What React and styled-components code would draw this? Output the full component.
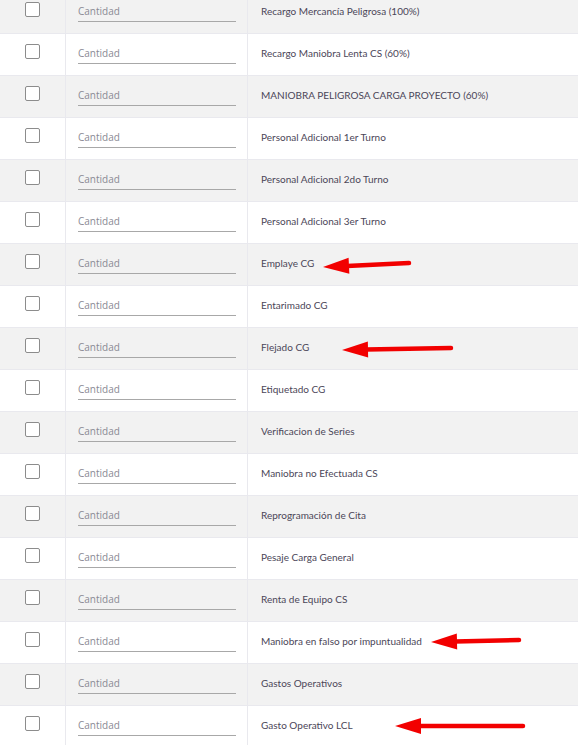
import React from 'react';
import styled, { createGlobalStyle } from 'styled-components';

const GlobalStyle = createGlobalStyle`
  html, body {
    margin: 0;
    padding: 0;
    background: #fff;
    overflow: hidden;
  }
  body {
    font-family: Lato, "Open Sans", sans-serif;
  }
`;

const Page = styled.div`
  position: relative;
  width: 578px;
  height: 745px;
  overflow: hidden;
`;

const Table = styled.div`
  margin-top: -8px;
  display: flex;
  flex-direction: column;
`;

const Row = styled.div`
  display: grid;
  grid-template-columns: 66px 182px 1fr;
  height: 42px;
  box-sizing: border-box;
  border-bottom: 1px solid #e9e9ee;
  background: ${(p) => (p.$striped ? '#f2f2f2' : '#ffffff')};
`;

const CheckCell = styled.div`
  display: flex;
  justify-content: center;
  padding-top: 10px;
  border-right: 1px solid #e9e9ee;
`;

const Box = styled.span`
  display: block;
  width: 15px;
  height: 15px;
  box-sizing: border-box;
  border: 1.5px solid #8c8c8c;
  border-radius: 2px;
  background: #fff;
`;

const InputCell = styled.div`
  padding: 10px 12px 0 12px;
  border-right: 1px solid #e9e9ee;
`;

const QtyInput = styled.input`
  display: block;
  width: 158px;
  height: 20px;
  box-sizing: border-box;
  padding: 0 0 2px 0;
  border: none;
  border-bottom: 1.5px solid #a8a8a8;
  background: transparent;
  outline: none;
  font-family: "Open Sans", sans-serif;
  font-size: 10px;
  color: #444;
  &::placeholder {
    color: #8a8a94;
  }
`;

const LabelCell = styled.div`
  display: flex;
  align-items: center;
  padding: 0 0 3px 13px;
  font-family: Lato, sans-serif;
  font-size: 10px;
  color: #4b4658;
`;

const Overlay = styled.svg`
  position: absolute;
  left: 0;
  top: 0;
  pointer-events: none;
`;

const items = [
  'Recargo Mercancía Peligrosa (100%)',
  'Recargo Maniobra Lenta CS (60%)',
  'MANIOBRA PELIGROSA CARGA PROYECTO (60%)',
  'Personal Adicional 1er Turno',
  'Personal Adicional 2do Turno',
  'Personal Adicional 3er Turno',
  'Emplaye CG',
  'Entarimado CG',
  'Flejado CG',
  'Etiquetado CG',
  'Verificacion de Series',
  'Maniobra no Efectuada CS',
  'Reprogramación de Cita',
  'Pesaje Carga General',
  'Renta de Equipo CS',
  'Maniobra en falso por impuntualidad',
  'Gastos Operativos',
  'Gasto Operativo LCL',
];

// red annotation arrows: tip, tail
const arrows = [
  { x1: 323, y1: 267, x2: 409, y2: 263 },
  { x1: 342, y1: 350, x2: 451, y2: 348 },
  { x1: 431, y1: 642, x2: 519, y2: 640 },
  { x1: 395, y1: 726, x2: 523, y2: 726 },
];

const Arrow = ({ x1, y1, x2, y2 }) => {
  const ang = Math.atan2(y2 - y1, x2 - x1);
  const len = 26;
  const half = 8;
  const bx = x1 + Math.cos(ang) * len;
  const by = y1 + Math.sin(ang) * len;
  const nx = -Math.sin(ang) * half;
  const ny = Math.cos(ang) * half;
  return (
    <g>
      <line x1={bx - Math.cos(ang) * 2} y1={by - Math.sin(ang) * 2} x2={x2} y2={y2} stroke="#f20000" strokeWidth="4.5" strokeLinecap="round" />
      <polygon points={`${x1},${y1} ${bx + nx},${by + ny} ${bx - nx},${by - ny}`} fill="#f20000" />
    </g>
  );
};

export default function App() {
  return (
    <Page>
      <GlobalStyle />
      <Table>
        {items.map((label, i) => (
          <Row key={label} $striped={i % 2 === 0}>
            <CheckCell>
              <Box />
            </CheckCell>
            <InputCell>
              <QtyInput placeholder="Cantidad" />
            </InputCell>
            <LabelCell>{label}</LabelCell>
          </Row>
        ))}
      </Table>
      <Overlay width="578" height="745">
        {arrows.map((a, i) => (
          <Arrow key={i} {...a} />
        ))}
      </Overlay>
    </Page>
  );
}
